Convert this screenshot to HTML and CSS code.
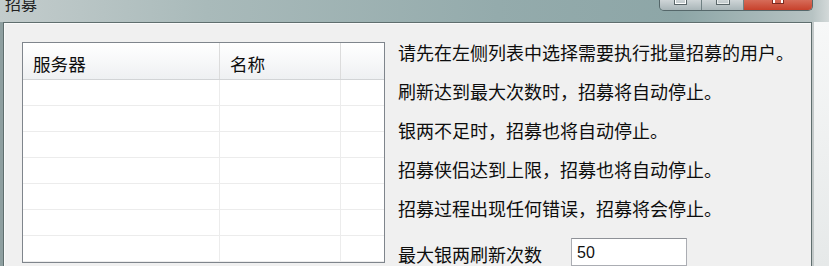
FILE: index.html
```html
<!DOCTYPE html>
<html lang="zh-CN">
<head>
  <meta charset="UTF-8">
  <title>招募</title>
  <link rel="stylesheet" href="styles.css">
</head>
<body>

  <div class="window">
    <div class="titlebar">
      <span class="title">招募</span>
      <div class="controls">
        <span class="ctl min"><i></i></span>
        <span class="ctl max"><i></i></span>
        <span class="ctl close"><i></i></span>
      </div>
    </div>

    <div class="frame">
      <div class="panel">
        <div class="list">
          <div class="list-head">
            <div class="cell">服务器</div>
            <div class="cell">名称</div>
            <div class="cell"></div>
          </div>
          <div class="row"><div class="cell"></div><div class="cell"></div><div class="cell"></div></div>
          <div class="row"><div class="cell"></div><div class="cell"></div><div class="cell"></div></div>
          <div class="row"><div class="cell"></div><div class="cell"></div><div class="cell"></div></div>
          <div class="row"><div class="cell"></div><div class="cell"></div><div class="cell"></div></div>
          <div class="row"><div class="cell"></div><div class="cell"></div><div class="cell"></div></div>
          <div class="row"><div class="cell"></div><div class="cell"></div><div class="cell"></div></div>
          <div class="row"><div class="cell"></div><div class="cell"></div><div class="cell"></div></div>
        </div>

        <div class="info">
          <p>请先在左侧列表中选择需要执行批量招募的用户。</p>
          <p>刷新达到最大次数时，招募将自动停止。</p>
          <p>银两不足时，招募也将自动停止。</p>
          <p>招募侠侣达到上限，招募也将自动停止。</p>
          <p>招募过程出现任何错误，招募将会停止。</p>
          <div class="field">
            <label for="maxRefresh">最大银两刷新次数</label>
            <input id="maxRefresh" type="text" value="50">
          </div>
        </div>
      </div>
      <div class="edge"></div>
    </div>
  </div>

</body>
</html>
```

FILE: styles.css
```css
body {
  margin: 0;
  font-family: "Noto Sans CJK SC", "Liberation Sans", sans-serif;
  color: #0d0d0d;
  background: #8e9fa0;
}

.window {
  width: 829px;
  height: 266px;
  overflow: hidden;
}

/* title bar */
.titlebar {
  height: 22px;
  display: flex;
  justify-content: space-between;
  align-items: flex-start;
  background: linear-gradient(to right, #c3cccc, #a9baba 25%, #94abac 60%, #8da6a7 82%, #b7c3c3 98%, #d3d9d9);
}

.title {
  margin: -6px 0 0 5px;
  font-size: 16px;
  line-height: 18px;
  color: #222;
}

.controls {
  display: flex;
  margin-right: 16px;
  margin-top: -1px;
  height: 11px;
  border: 1px solid #55676a;
  border-top: none;
  border-radius: 0 0 5px 5px;
  overflow: hidden;
}

.ctl {
  display: flex;
  justify-content: center;
}

.ctl i {
  display: block;
}

.min,
.max {
  width: 41px;
  background: linear-gradient(#d2d8da, #a9b5b8);
  border-right: 1px solid #6f8083;
}

.min i,
.max i {
  width: 9px;
  height: 4px;
  border: 1px solid #fff;
  border-top: none;
  box-shadow: 0 0 0 1px #5a6669;
}

.max i {
  width: 10px;
  border-color: #e8ecec;
}

.close {
  width: 68px;
  background: linear-gradient(#d8705d, #c7412c);
}

.close i {
  width: 6px;
  height: 4px;
  border-left: 2px solid #fff;
  border-right: 2px solid #fff;
  box-shadow: 0 0 0 1px #7a2a20;
}

/* window body */
.frame {
  display: flex;
  height: 244px;
}

.panel {
  flex: none;
  width: 809px;
  margin-left: 3px;
  display: flex;
  align-items: flex-start;
  gap: 13px;
  padding: 19px 0 0 18px;
  box-sizing: border-box;
  background: #f0f0f0;
  border: 1px solid #5f6e6e;
  border-bottom: none;
  box-shadow: inset 1px 1px 0 #fafafa;
}

.edge {
  flex: 1;
  border-left: 2px solid #c3c9c9;
  background: linear-gradient(#f7f8f8, #e6e9e9);
}

/* list view */
.list {
  width: 361px;
  border: 1px solid #7f858c;
  background: #fff;
}

.list-head,
.row {
  display: grid;
  grid-template-columns: 197px 121px 1fr;
}

.list-head {
  height: 36px;
  background: linear-gradient(#ffffff, #f7f8f9 50%, #eef0f2);
  border-bottom: 1px solid #d2d4d6;
}

.list-head .cell {
  display: flex;
  align-items: center;
  padding: 5px 0 0 10px;
  font-size: 17.6px;
  border-right: 1px solid #dcdcdc;
}

.list-head .cell:last-child {
  border-right: none;
}

.row {
  height: 25px;
  border-bottom: 1px solid #ececec;
}

.row .cell {
  border-right: 1px solid #ececec;
}

.row .cell:last-child {
  border-right: none;
}

/* instructions */
.info {
  margin-top: -9px;
}

.info p {
  margin: 0;
  font-size: 18px;
  line-height: 39px;
  white-space: nowrap;
}

.field {
  display: flex;
  align-items: flex-start;
  margin-top: 10px;
}

.field label {
  width: 173px;
  font-size: 18px;
  line-height: 24px;
  margin-top: 4px;
}

.field input {
  width: 116px;
  height: 28px;
  box-sizing: border-box;
  border: 1px solid #abadb3;
  border-top-color: #8e9197;
  padding: 2px 5px 0;
  font-family: "Liberation Sans", sans-serif;
  font-size: 16px;
  color: #111;
  background: #fff;
}
```
